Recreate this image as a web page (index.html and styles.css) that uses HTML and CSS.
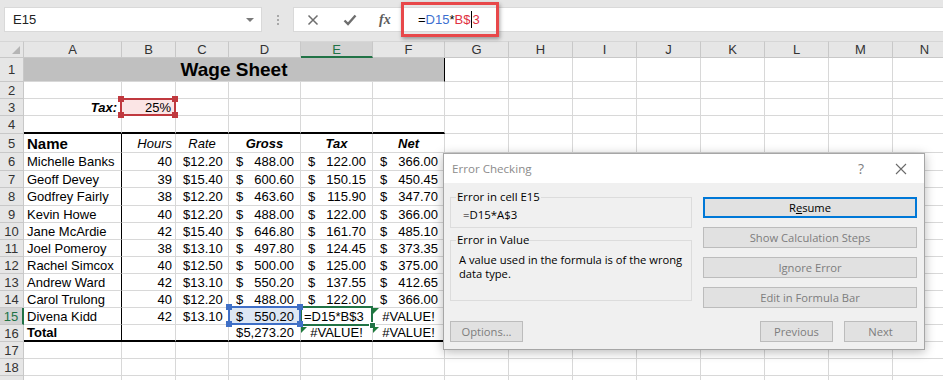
FILE: index.html
```html
<!DOCTYPE html>
<html lang="en">
<head>
<meta charset="utf-8">
<title>Wage Sheet - Error Checking</title>
<link rel="stylesheet" href="styles.css">
</head>
<body>
<header class="fbar">
  <div class="namebox"><span>E15</span><span class="nb-arrow"></span></div>
  <div class="grip"><i></i><i></i><i></i></div>
  <div class="fbox">
    <div class="fb-icons">
      <svg class="ico" width="12" height="12" viewBox="0 0 12 12"><path d="M1.5 1.5 L10.5 10.5 M10.5 1.5 L1.5 10.5" stroke="#6e6e6e" stroke-width="1.5" fill="none"/></svg>
      <svg class="ico" width="14" height="12" viewBox="0 0 14 12"><path d="M1.5 6.5 L5 10 L12.5 1.5" stroke="#6e6e6e" stroke-width="2.4" fill="none"/></svg>
      <span class="fx">fx</span>
    </div>
    <div class="fb-input"><span>=</span><span class="ref-blue">D15</span><span>*</span><span class="ref-red">B$</span><span class="caret"></span><span class="ref-red">3</span></div>
  </div>
</header>
<div class="annot"></div>

<main class="sheet">
  <div class="corner"></div>
  <div class="ch">A</div><div class="ch">B</div><div class="ch">C</div><div class="ch">D</div><div class="ch sel">E</div><div class="ch">F</div><div class="ch">G</div><div class="ch">H</div><div class="ch">I</div><div class="ch">J</div><div class="ch">K</div><div class="ch">L</div><div class="ch">M</div><div class="ch">N</div>

  <div class="rh">1</div>
  <div class="c title">Wage Sheet</div>
  <div class="c"></div><div class="c"></div><div class="c"></div><div class="c"></div><div class="c"></div><div class="c"></div><div class="c"></div><div class="c"></div>

  <div class="rh">2</div>
  <div class="c"></div><div class="c"></div><div class="c"></div><div class="c"></div><div class="c"></div><div class="c"></div><div class="c"></div><div class="c"></div><div class="c"></div><div class="c"></div><div class="c"></div><div class="c"></div><div class="c"></div><div class="c"></div>

  <div class="rh">3</div>
  <div class="c r bi taxlbl">Tax:</div>
  <div class="c r pct">25%<span class="refbox red"><i class="tl"></i><i class="tr"></i><i class="bl"></i><i class="br"></i></span></div>
  <div class="c"></div><div class="c"></div><div class="c"></div><div class="c"></div><div class="c"></div><div class="c"></div><div class="c"></div><div class="c"></div><div class="c"></div><div class="c"></div><div class="c"></div><div class="c"></div>

  <div class="rh">4</div>
  <div class="c bb"></div><div class="c bb"></div><div class="c bb"></div><div class="c bb"></div><div class="c bb"></div><div class="c bb"></div>
  <div class="c"></div><div class="c"></div><div class="c"></div><div class="c"></div><div class="c"></div><div class="c"></div><div class="c"></div><div class="c"></div>

  <div class="rh">5</div>
  <div class="c ka name-h">Name</div><div class="c r it">Hours</div><div class="c ctr it">Rate</div><div class="c ctr bi">Gross</div><div class="c ctr bi">Tax</div><div class="c ctr bi">Net</div>
  <div class="c"></div><div class="c"></div><div class="c"></div><div class="c"></div><div class="c"></div><div class="c"></div><div class="c"></div><div class="c"></div>

  <div class="rh">6</div>
  <div class="c ka">Michelle Banks</div><div class="c r">40</div><div class="c acc"><span>$</span><span>12.20</span></div><div class="c acc"><span>$</span><span>488.00</span></div><div class="c acc"><span>$</span><span>122.00</span></div><div class="c acc"><span>$</span><span>366.00</span></div>
  <div class="c"></div><div class="c"></div><div class="c"></div><div class="c"></div><div class="c"></div><div class="c"></div><div class="c"></div><div class="c"></div>

  <div class="rh">7</div>
  <div class="c ka">Geoff Devey</div><div class="c r">39</div><div class="c acc"><span>$</span><span>15.40</span></div><div class="c acc"><span>$</span><span>600.60</span></div><div class="c acc"><span>$</span><span>150.15</span></div><div class="c acc"><span>$</span><span>450.45</span></div>
  <div class="c"></div><div class="c"></div><div class="c"></div><div class="c"></div><div class="c"></div><div class="c"></div><div class="c"></div><div class="c"></div>

  <div class="rh">8</div>
  <div class="c ka">Godfrey Fairly</div><div class="c r">38</div><div class="c acc"><span>$</span><span>12.20</span></div><div class="c acc"><span>$</span><span>463.60</span></div><div class="c acc"><span>$</span><span>115.90</span></div><div class="c acc"><span>$</span><span>347.70</span></div>
  <div class="c"></div><div class="c"></div><div class="c"></div><div class="c"></div><div class="c"></div><div class="c"></div><div class="c"></div><div class="c"></div>

  <div class="rh">9</div>
  <div class="c ka">Kevin Howe</div><div class="c r">40</div><div class="c acc"><span>$</span><span>12.20</span></div><div class="c acc"><span>$</span><span>488.00</span></div><div class="c acc"><span>$</span><span>122.00</span></div><div class="c acc"><span>$</span><span>366.00</span></div>
  <div class="c"></div><div class="c"></div><div class="c"></div><div class="c"></div><div class="c"></div><div class="c"></div><div class="c"></div><div class="c"></div>

  <div class="rh">10</div>
  <div class="c ka">Jane McArdie</div><div class="c r">42</div><div class="c acc"><span>$</span><span>15.40</span></div><div class="c acc"><span>$</span><span>646.80</span></div><div class="c acc"><span>$</span><span>161.70</span></div><div class="c acc"><span>$</span><span>485.10</span></div>
  <div class="c"></div><div class="c"></div><div class="c"></div><div class="c"></div><div class="c"></div><div class="c"></div><div class="c"></div><div class="c"></div>

  <div class="rh">11</div>
  <div class="c ka">Joel Pomeroy</div><div class="c r">38</div><div class="c acc"><span>$</span><span>13.10</span></div><div class="c acc"><span>$</span><span>497.80</span></div><div class="c acc"><span>$</span><span>124.45</span></div><div class="c acc"><span>$</span><span>373.35</span></div>
  <div class="c"></div><div class="c"></div><div class="c"></div><div class="c"></div><div class="c"></div><div class="c"></div><div class="c"></div><div class="c"></div>

  <div class="rh">12</div>
  <div class="c ka">Rachel Simcox</div><div class="c r">40</div><div class="c acc"><span>$</span><span>12.50</span></div><div class="c acc"><span>$</span><span>500.00</span></div><div class="c acc"><span>$</span><span>125.00</span></div><div class="c acc"><span>$</span><span>375.00</span></div>
  <div class="c"></div><div class="c"></div><div class="c"></div><div class="c"></div><div class="c"></div><div class="c"></div><div class="c"></div><div class="c"></div>

  <div class="rh">13</div>
  <div class="c ka">Andrew Ward</div><div class="c r">42</div><div class="c acc"><span>$</span><span>13.10</span></div><div class="c acc"><span>$</span><span>550.20</span></div><div class="c acc"><span>$</span><span>137.55</span></div><div class="c acc"><span>$</span><span>412.65</span></div>
  <div class="c"></div><div class="c"></div><div class="c"></div><div class="c"></div><div class="c"></div><div class="c"></div><div class="c"></div><div class="c"></div>

  <div class="rh">14</div>
  <div class="c ka">Carol Trulong</div><div class="c r">40</div><div class="c acc"><span>$</span><span>12.20</span></div><div class="c acc"><span>$</span><span>488.00</span></div><div class="c acc"><span>$</span><span>122.00</span></div><div class="c acc"><span>$</span><span>366.00</span></div>
  <div class="c"></div><div class="c"></div><div class="c"></div><div class="c"></div><div class="c"></div><div class="c"></div><div class="c"></div><div class="c"></div>

  <div class="rh sel">15</div>
  <div class="c ka">Divena Kidd</div><div class="c r">42</div><div class="c acc"><span>$</span><span>13.10</span></div>
  <div class="c acc prec"><span>$</span><span>550.20</span><span class="refbox blue"><i class="tl"></i><i class="tr"></i><i class="bl"></i><i class="br"></i></span></div>
  <div class="c active">=D15*B$3<span class="activebox"><i class="handle"></i></span></div>
  <div class="c ctr err">#VALUE!</div>
  <div class="c"></div><div class="c"></div><div class="c"></div><div class="c"></div><div class="c"></div><div class="c"></div><div class="c"></div><div class="c"></div>

  <div class="rh">16</div>
  <div class="c ka bb name-t">Total</div><div class="c bb"></div><div class="c bb"></div><div class="c acc bb"><span>$</span><span>5,273.20</span></div><div class="c ctr bb err">#VALUE!</div><div class="c ctr bb err">#VALUE!</div>
  <div class="c"></div><div class="c"></div><div class="c"></div><div class="c"></div><div class="c"></div><div class="c"></div><div class="c"></div><div class="c"></div>

  <div class="rh">17</div>
  <div class="c"></div><div class="c"></div><div class="c"></div><div class="c"></div><div class="c"></div><div class="c"></div><div class="c"></div><div class="c"></div><div class="c"></div><div class="c"></div><div class="c"></div><div class="c"></div><div class="c"></div><div class="c"></div>

  <div class="rh">18</div>
  <div class="c"></div><div class="c"></div><div class="c"></div><div class="c"></div><div class="c"></div><div class="c"></div><div class="c"></div><div class="c"></div><div class="c"></div><div class="c"></div><div class="c"></div><div class="c"></div><div class="c"></div><div class="c"></div>

  <div class="rh"></div>
  <div class="c"></div><div class="c"></div><div class="c"></div><div class="c"></div><div class="c"></div><div class="c"></div><div class="c"></div><div class="c"></div><div class="c"></div><div class="c"></div><div class="c"></div><div class="c"></div><div class="c"></div><div class="c"></div>
</main>

<section class="dlg" role="dialog" aria-label="Error Checking">
  <div class="dlg-title">
    <span class="dlg-name">Error Checking</span>
    <div class="dlg-ctrls">
      <span class="q">?</span>
      <svg width="14" height="14" viewBox="0 0 14 14"><path d="M2 2 L12 12 M12 2 L2 12" stroke="#6a6a6a" stroke-width="1.1" fill="none"/></svg>
    </div>
  </div>
  <div class="dlg-body">
    <div class="dlg-main">
      <div class="dlg-left">
        <fieldset class="grp g1"><legend>Error in cell E15</legend><div class="fml">=D15*A$3</div></fieldset>
        <fieldset class="grp g2"><legend>Error in Value</legend><p>A value used in the formula is of the wrong<br>data type.</p></fieldset>
      </div>
      <div class="dlg-right">
        <button class="btn primary">R<u>e</u>sume</button>
        <button class="btn">Show Calculation Steps</button>
        <button class="btn">Ignore Error</button>
        <button class="btn">Edit in Formula Bar</button>
      </div>
    </div>
    <div class="dlg-foot">
      <button class="btn sm">Options...</button>
      <span class="spacer"></span>
      <button class="btn sm">Previous</button>
      <button class="btn sm">Next</button>
    </div>
  </div>
</section>
</body>
</html>
```
FILE: styles.css
```css
* { box-sizing: border-box; }
html, body { margin: 0; padding: 0; }
body {
  width: 943px;
  height: 380px;
  overflow: hidden;
  position: relative;
  background: #fff;
  font-family: "Liberation Sans", Arial, sans-serif;
  color: #000;
}

/* ---------- formula bar ---------- */
.fbar {
  height: 42px;
  background: #e6e6e6;
  display: flex;
  align-items: flex-start;
  padding-top: 7px;
  border-bottom: 1px solid #d6d6d6;
}
.namebox {
  margin-left: 4px;
  width: 258px;
  height: 25px;
  background: #fff;
  border: 1px solid #d9d9d9;
  display: flex;
  align-items: center;
  justify-content: space-between;
  padding: 0 7px 0 8px;
  font-size: 13px;
  color: #222;
}
.nb-arrow {
  width: 0; height: 0;
  border-left: 4px solid transparent;
  border-right: 4px solid transparent;
  border-top: 4px solid #7a7a7a;
}
.grip {
  width: 31px;
  height: 25px;
  display: flex;
  flex-direction: column;
  align-items: center;
  justify-content: center;
  gap: 2px;
}
.grip i { display: block; width: 2px; height: 2px; background: #a8a8a8; }
.fbox {
  flex: 1;
  height: 25px;
  background: #fff;
  border: 1px solid #d9d9d9;
  border-right: none;
  display: flex;
  align-items: center;
}
.fb-icons {
  width: 108px;
  display: flex;
  align-items: center;
  padding-left: 13px;
  gap: 24px;
}
.ico { display: block; }
.fx {
  font-family: "Liberation Serif", "Times New Roman", serif;
  font-style: italic;
  font-weight: bold;
  font-size: 14px;
  color: #5c5c5c;
  margin-left: -2px;
}
.fb-input {
  padding-left: 16px;
  font-size: 13px;
  display: flex;
  align-items: center;
}
.ref-blue { color: #3c6fd0; }
.ref-red { color: #e0303f; }
.caret { display: inline-block; width: 1px; height: 17px; background: #000; margin: 0 0 0 1px; }

.annot {
  position: absolute;
  left: 401px;
  top: 2px;
  width: 98px;
  height: 35px;
  border: 3px solid #e8484a;
  box-shadow: 1px 2px 4px rgba(0,0,0,0.35);
}

/* ---------- grid ---------- */
.sheet {
  display: grid;
  grid-template-columns: 24px 98px 54px 53px 72px 72px 72px repeat(8, 64px);
  grid-template-rows: 17px 24px 17px 17px 18px 19px 18px 17px 18px 17px 17px 17px 17px 17px 17px 17px 17px 17px 17px 17px;
  margin-top: -1px;
}
.c {
  border-right: 1px solid #d8d8d8;
  border-bottom: 1px solid #d8d8d8;
  font-size: 13px;
  line-height: 15px;
  padding: 0 3px;
  white-space: nowrap;
  display: flex;
  align-items: center;
  position: relative;
}
.corner, .ch, .rh {
  background: #e6e6e6;
  border-right: 1px solid #c8c8c8;
  border-bottom: 1px solid #c8c8c8;
  font-size: 13px;
  color: #333;
  display: flex;
  align-items: center;
  justify-content: center;
}
.corner { position: relative; border-top: 1px solid #d6d6d6; }
.corner::after {
  content: "";
  position: absolute;
  right: 3px;
  bottom: 3px;
  border-left: 8px solid transparent;
  border-bottom: 8px solid #b5b5b5;
}
.ch { border-top: 1px solid #d6d6d6; }
.ch.sel { background: #d2d2d2; color: #217346; border-bottom: 2px solid #217346; }
.rh.sel { background: #d2d2d2; color: #217346; border-right: 2px solid #217346; }

.r { justify-content: flex-end; }
.ctr { justify-content: center; }
.ka { border-right-color: #000; }
.it { font-style: italic; }
.bi { font-weight: bold; font-style: italic; }
.bb { border-bottom: 2px solid #000; }
.acc { justify-content: space-between; padding: 0 6px 0 7px; }
.title {
  grid-column: span 6;
  background: #c0c0c0;
  font-weight: bold;
  font-size: 19px;
  justify-content: center;
  border-right-color: #000;
}
.taxlbl { padding-right: 4px; }
.name-h { font-weight: bold; font-size: 15px; }
.name-t { font-weight: bold; }

.pct { background: #fbe5e5; padding-right: 4px; }
.prec { background: #dde7f4; }

.refbox {
  position: absolute;
  left: -2px; top: -1px; right: -1px; bottom: -1px;
  border: 2px solid;
  pointer-events: none;
  z-index: 3;
}
.refbox.red { border-color: #c0393f; }
.refbox.blue { border-color: #3f6fc6; left: -1px; top: -2px; right: -1px; bottom: -1px; }
.refbox i { position: absolute; width: 6px; height: 6px; }
.refbox.red i { background: #c0393f; }
.refbox.blue i { background: #3f6fc6; }
.refbox .tl { left: -4px; top: -4px; }
.refbox .tr { right: -4px; top: -4px; }
.refbox .bl { left: -4px; bottom: -4px; }
.refbox .br { right: -4px; bottom: -4px; }

.active { padding-left: 3px; }
.activebox {
  position: absolute;
  left: -1px; top: -2px; right: -1px; bottom: -2px;
  border: 2px solid #217346;
  z-index: 2;
}
.activebox .handle {
  position: absolute;
  right: -5px; bottom: -5px;
  width: 7px; height: 7px;
  background: #217346;
  border: 1px solid #fff;
}
.err::before {
  content: "";
  position: absolute;
  left: 0; top: 0;
  border-top: 6px solid #1e7a3c;
  border-right: 6px solid transparent;
  z-index: 4;
}
.bb.err::before { top: 2px; }

/* ---------- dialog ---------- */
.dlg {
  position: absolute;
  left: 443px;
  top: 153px;
  width: 482px;
  height: 197px;
  border: 1px solid #a6a6a6;
  background: #f0f0f0;
  box-shadow: 0 2px 10px rgba(0,0,0,0.28);
  font-family: "Open Sans", "Noto Sans", sans-serif;
  font-size: 11.2px;
  color: #000;
  display: flex;
  flex-direction: column;
  z-index: 10;
}
.dlg-title {
  height: 29px;
  background: #fff;
  display: flex;
  align-items: center;
  justify-content: space-between;
  padding: 0 16px 0 8px;
}
.dlg-name { color: #8c8c8c; font-size: 11.6px; }
.dlg-ctrls { display: flex; align-items: center; gap: 30px; }
.q { color: #808080; font-size: 14px; }
.dlg-body {
  flex: 1;
  display: flex;
  flex-direction: column;
  padding: 6px 7px 7px 6px;
}
.dlg-main { display: flex; gap: 11px; }
.dlg-left { width: 242px; display: flex; flex-direction: column; }
.grp {
  margin: 0;
  border: 1px solid #dcdcdc;
  padding: 0 6px 0 8px;
  min-width: 0;
}
.grp legend {
  padding: 0 1px;
  margin-left: -3px;
  line-height: 16px;
  font-size: 11.4px;
}
.g1 { height: 39px; }
.fml { padding: 2px 0 0 4px; line-height: 16px; font-size: 11.4px; }
.g2 { height: 69px; margin-top: 4px; }
.g2 p { margin: 5px 0 0 0; line-height: 14px; font-size: 11.2px; white-space: nowrap; }
.dlg-right {
  width: 214px;
  display: flex;
  flex-direction: column;
  gap: 9px;
  padding-top: 8px;
}
.btn {
  height: 21px;
  border: 1px solid #bcbcbc;
  background: #e1e1e1;
  font-family: inherit;
  font-size: 11.2px;
  color: #7d7d7d;
  padding: 0;
  margin: 0;
}
.btn.primary { border: 2px solid #0078d7; color: #000; }
.btn u { text-decoration: underline; }
.dlg-foot {
  margin-top: auto;
  display: flex;
  gap: 11px;
}
.spacer { flex: 1; }
.btn.sm { width: 73px; }
```
